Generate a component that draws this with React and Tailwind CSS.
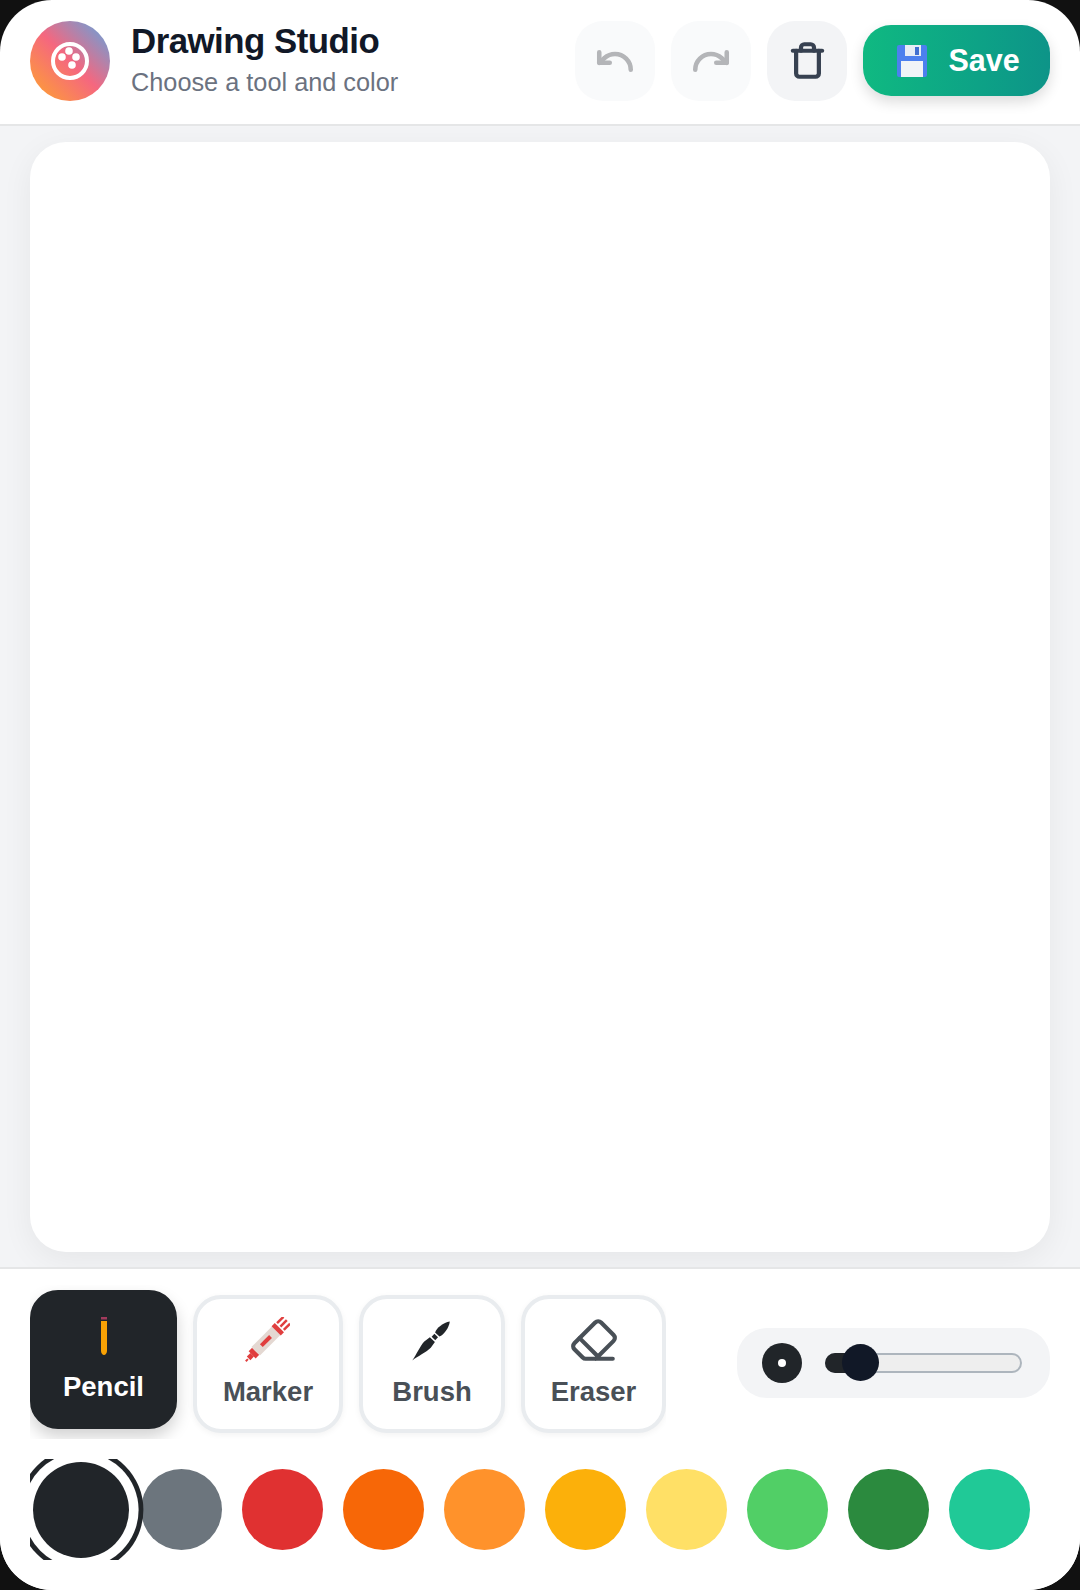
import React from 'react';
import { Undo, Redo, Trash, Eraser } from 'lucide-react';

const colors = ['#6c757d', '#e03131', '#f76707', '#ff922b', '#fcb00a', '#ffe066', '#51cf66', '#2b8a3e', '#20c997'];

const PaletteMark = () => (
    <svg width="38" height="38" viewBox="0 0 38 38" fill="none">
        <circle cx="19" cy="19" r="17" stroke="white" strokeWidth="4" />
        <circle cx="11" cy="15" r="3.8" fill="white" />
        <circle cx="18" cy="9" r="3.8" fill="white" />
        <circle cx="25" cy="15" r="3.8" fill="white" />
        <circle cx="21" cy="23" r="3.8" fill="white" />
    </svg>
);

const FloppyIcon = () => (
    <svg width="30" height="32" viewBox="0 0 30 32">
        <path d="M2 0h26a2 2 0 0 1 2 2v28a2 2 0 0 1-2 2H2a2 2 0 0 1-2-2V2a2 2 0 0 1 2-2z" fill="#4c80ee" />
        <rect x="8" y="0" width="16" height="11" fill="#e6edf5" />
        <rect x="18" y="2" width="4" height="8" fill="#3f6fd0" />
        <rect x="4" y="16" width="22" height="16" fill="#f1f4f7" />
    </svg>
);

const PencilIcon = () => (
    <svg width="8" height="40" viewBox="0 0 8 40" className="translate-y-[2px]">
        <rect x="1" y="0" width="6" height="2.5" fill="#a23a5c" />
        <path d="M1 4h6v30c0 2-1.500 4-3 4s-3-2-3-4z" fill="#f8a205" />
    </svg>
);

const MarkerIcon = () => (
    <svg width="46" height="46" viewBox="0 0 46 46" className="-translate-x-[1px]">
        <g transform="translate(23 23) rotate(-45)">
            <rect x="-30" y="-1" width="3" height="2" fill="#e03e3e" />
            <rect x="-26" y="-2.5" width="5" height="5" fill="#e03e3e" />
            <rect x="-21" y="-5" width="5" height="10" fill="#e03e3e" />
            <rect x="-16" y="-6" width="29" height="12" fill="#e4d8d2" />
            <rect x="-8" y="-2" width="13" height="4" fill="#e03e3e" />
            <rect x="13" y="-6.5" width="4.500" height="13" fill="#e03e3e" />
            <rect x="19" y="-6" width="9" height="2.500" fill="#e03e3e" />
            <rect x="19" y="-1.250" width="9" height="2.500" fill="#e03e3e" />
            <rect x="19" y="3.500" width="9" height="2.500" fill="#e03e3e" />
        </g>
    </svg>
);

const BrushIcon = () => (
    <svg width="40" height="42" viewBox="0 0 40 42" className="-translate-x-[1px] translate-y-[1px]">
        <g transform="translate(20 21) rotate(-46)" fill="#212529">
            <path d="M-27 0C-20-1-11-4.500-5-4.500L2-3.500V3.500L-5 4.500C-11 4.500-20 1-27 0Z" />
            <rect x="3.500" y="-2.500" width="4" height="5" />
            <path d="M9-3C13-5 22-4 27 0 22 4 13 5 9 3Z" />
        </g>
    </svg>
);

const ToolButton = ({ label, icon, active, width }) => (
    <button
        className={`flex flex-col items-center shrink-0 rounded-[28px] border-4 pt-[17px] gap-3 ${width} ${
            active
                ? 'h-[139px] -translate-y-[5px] bg-[#212529] border-[#212529] text-white shadow-[0_8px_16px_rgba(0,0,0,0.18)]'
                : 'h-[138px] bg-white border-[#e9ecef] text-[#495057] shadow-[0_2px_6px_rgba(0,0,0,0.05)]'
        }`}
    >
        <span className="flex h-12 items-center justify-center">{icon}</span>
        <span className="text-[27.5px] leading-8 font-bold">{label}</span>
    </button>
);

const App = () => {
    return (
        <div className="h-[1590px] w-[1080px] bg-[#111111] font-['Liberation_Sans',sans-serif]">
            <main className="flex h-full flex-col overflow-hidden rounded-[52px] bg-white">
                <header className="flex h-[126px] shrink-0 items-center justify-between border-b-2 border-[#e5e6e7] px-[30px] pb-[3px]">
                    <div className="flex items-center gap-[21px]">
                        <div className="flex h-20 w-20 items-center justify-center rounded-full bg-linear-to-tr/srgb from-[#ffa62b] via-[#f5677f] to-[#58a8e4]">
                            <PaletteMark />
                        </div>
                        <div className="-translate-y-[1px]">
                            <h1 className="text-[34.8px] leading-[44px] font-bold tracking-[-0.5px] text-[#111827]">Drawing Studio</h1>
                            <p className="text-[25.3px] leading-[38px] text-[#6b7280]">Choose a tool and color</p>
                        </div>
                    </div>
                    <div className="flex items-center gap-4">
                        <button className="flex h-20 w-20 items-center justify-center rounded-[28px] bg-[#f9fafb] text-[#b4b5b8]">
                            <Undo size={42} strokeWidth={2.6} />
                        </button>
                        <button className="flex h-20 w-20 items-center justify-center rounded-[28px] bg-[#f9fafb] text-[#b4b5b8]">
                            <Redo size={42} strokeWidth={2.6} />
                        </button>
                        <button className="flex h-20 w-20 items-center justify-center rounded-[28px] bg-[#f3f4f6] text-[#374151]">
                            <Trash size={39} strokeWidth={2.6} />
                        </button>
                        <button className="flex h-[71px] w-[187px] items-center justify-center gap-[21px] rounded-[28px] bg-linear-to-r from-[#10b981] to-[#0d9488] pl-1 text-[30.5px] font-bold text-white shadow-[0_6px_14px_rgba(0,0,0,0.14)]">
                            <FloppyIcon />
                            Save
                        </button>
                    </div>
                </header>

                <section className="flex min-h-0 flex-1 bg-[#f3f4f6] px-[30px] pt-4 pb-[15px]">
                    <div className="flex-1 rounded-[36px] bg-white shadow-[0_8px_32px_rgba(0,0,0,0.06)]" />
                </section>

                <footer className="h-[323px] shrink-0 border-t-2 border-[#e5e6e7] bg-white px-[30px] pt-4">
                    <div className="flex items-start justify-between">
                        <div className="flex h-[154px] gap-4 overflow-hidden pt-[10px]">
                            <ToolButton label="Pencil" icon={<PencilIcon />} active width="w-[147px]" />
                            <ToolButton label="Marker" icon={<MarkerIcon />} width="w-[150px]" />
                            <ToolButton label="Brush" icon={<BrushIcon />} width="w-[146px]" />
                            <ToolButton label="Eraser" icon={<Eraser size={50} strokeWidth={2} className="shrink-0" />} width="w-[145px]" />
                        </div>
                        <div className="mt-[43px] flex h-[70px] w-[313px] items-center gap-[23px] rounded-[30px] bg-[#f3f4f6] pl-[25px]">
                            <div className="flex h-10 w-10 items-center justify-center rounded-full bg-[#212529]">
                                <div className="h-2 w-2 rounded-full bg-white" />
                            </div>
                            <div className="relative h-[20px] w-[197px] rounded-full border-[2.5px] border-[#adb5bd] bg-[#eeeeee]">
                                <div className="absolute top-[-2.5px] left-[-2.5px] h-[20px] w-9 rounded-l-full bg-[#212529]" />
                                <div className="absolute top-[-11px] left-[15px] h-[37px] w-[37px] rounded-full bg-[#111827]" />
                            </div>
                        </div>
                    </div>
                    <div className="mt-[20px] flex h-[101px] items-center gap-5 overflow-hidden pl-[11px]">
                        <div className="h-[80px] w-[80px] shrink-0 scale-[1.2] rounded-full bg-[#212529] ring-4 ring-[#212529] ring-offset-8 ring-offset-white" />
                        {colors.map((color) => (
                            <div key={color} className="h-[81px] w-[81px] shrink-0 rounded-full" style={{ backgroundColor: color }} />
                        ))}
                    </div>
                </footer>
            </main>
        </div>
    );
};

export default App;
